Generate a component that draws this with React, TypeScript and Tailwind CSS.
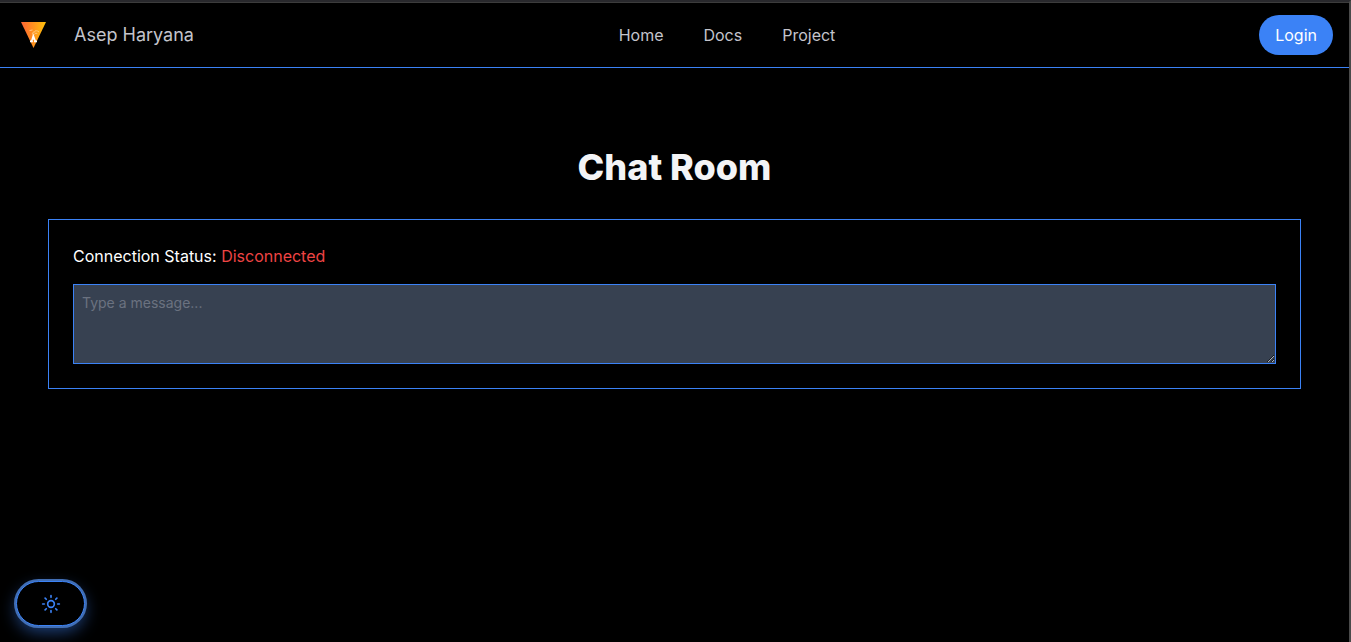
import React from "react";
import { Sun } from "lucide-react";

const links = ["Home", "Docs", "Project"];

function Logo() {
  return (
    <svg viewBox="0 0 26 26" className="size-[26px]" aria-hidden="true">
      <defs>
        <linearGradient id="logo-fill" x1="0" y1="0" x2="1" y2="0">
          <stop offset="0" stopColor="#ff6333" />
          <stop offset="1" stopColor="#ffc20a" />
        </linearGradient>
      </defs>
      <path d="M0 0H25L12.5 26Z" fill="url(#logo-fill)" />
      <path d="M9 18.4h2.8v1.8H9ZM13 18.4h3v1.8h-3Z" fill="#fff" />
      <path
        d="M10.6 19.4l1.7-5.8L14.4 19.4M11.2 17h2.6"
        stroke="#fff"
        strokeWidth="1.5"
        fill="none"
      />
      <path
        d="M11.5 12.5c-.5-2 1-2.8 2-2.3.3-1.8 2-1.8 2.6-1 .8-.7 1.7 0 1.4 1M13.5 12.5l1.2-1.5 1.6.6M8.5 8.6l3-.6"
        stroke="#ffe0a8"
        strokeWidth=".7"
        fill="none"
      />
    </svg>
  );
}

export default function App() {
  return (
    <div className="flex min-h-screen flex-col border-t-2 border-r-2 border-t-[#28282c] border-r-[#4a4a4a] bg-black font-['Inter',sans-serif] text-white">
      <header className="grid h-[66px] grid-cols-[1fr_auto_1fr] items-center border-t border-b border-t-[#3c3c3c] border-b-[#3b82f6] pr-4 pl-[21px] text-[#c4c4cc]">
        <a href="#" className="flex items-center gap-[27px] text-lg">
          <Logo />
          <span>Asep Haryana</span>
        </a>
        <nav className="ml-[100px] flex gap-10">
          {links.map((label) => (
            <a key={label} href={`#${label.toLowerCase()}`}>
              {label}
            </a>
          ))}
        </nav>
        <button className="h-10 justify-self-end rounded-full bg-[#3b82f6] px-4 text-white">
          Login
        </button>
      </header>

      <main className="flex flex-1 flex-col px-12 pt-[79px]">
        <h1 className="text-center text-4xl leading-10 font-extrabold text-[#f3f4f6]">Chat Room</h1>
        <section className="mt-8 border border-[#3b82f6] p-6">
          <p>
            Connection Status: <span className="text-[#ef4444]">Disconnected</span>
          </p>
          <textarea
            aria-label="Message"
            placeholder="Type a message..."
            className="mt-4 block h-20 w-full border border-[#3b82f6] bg-[#374151] p-2 text-sm placeholder:text-[#6b7280]"
          />
        </section>
      </main>

      <button
        aria-label="Toggle theme"
        className="fixed bottom-4 left-4 flex h-[45px] w-[69px] items-center justify-center rounded-full border border-[#3b82f6] bg-black text-[#3b82f6] shadow-[0_6px_16px_#3b82f680] ring-2 ring-[#416eb4]"
      >
        <Sun size={20} />
      </button>
    </div>
  );
}
